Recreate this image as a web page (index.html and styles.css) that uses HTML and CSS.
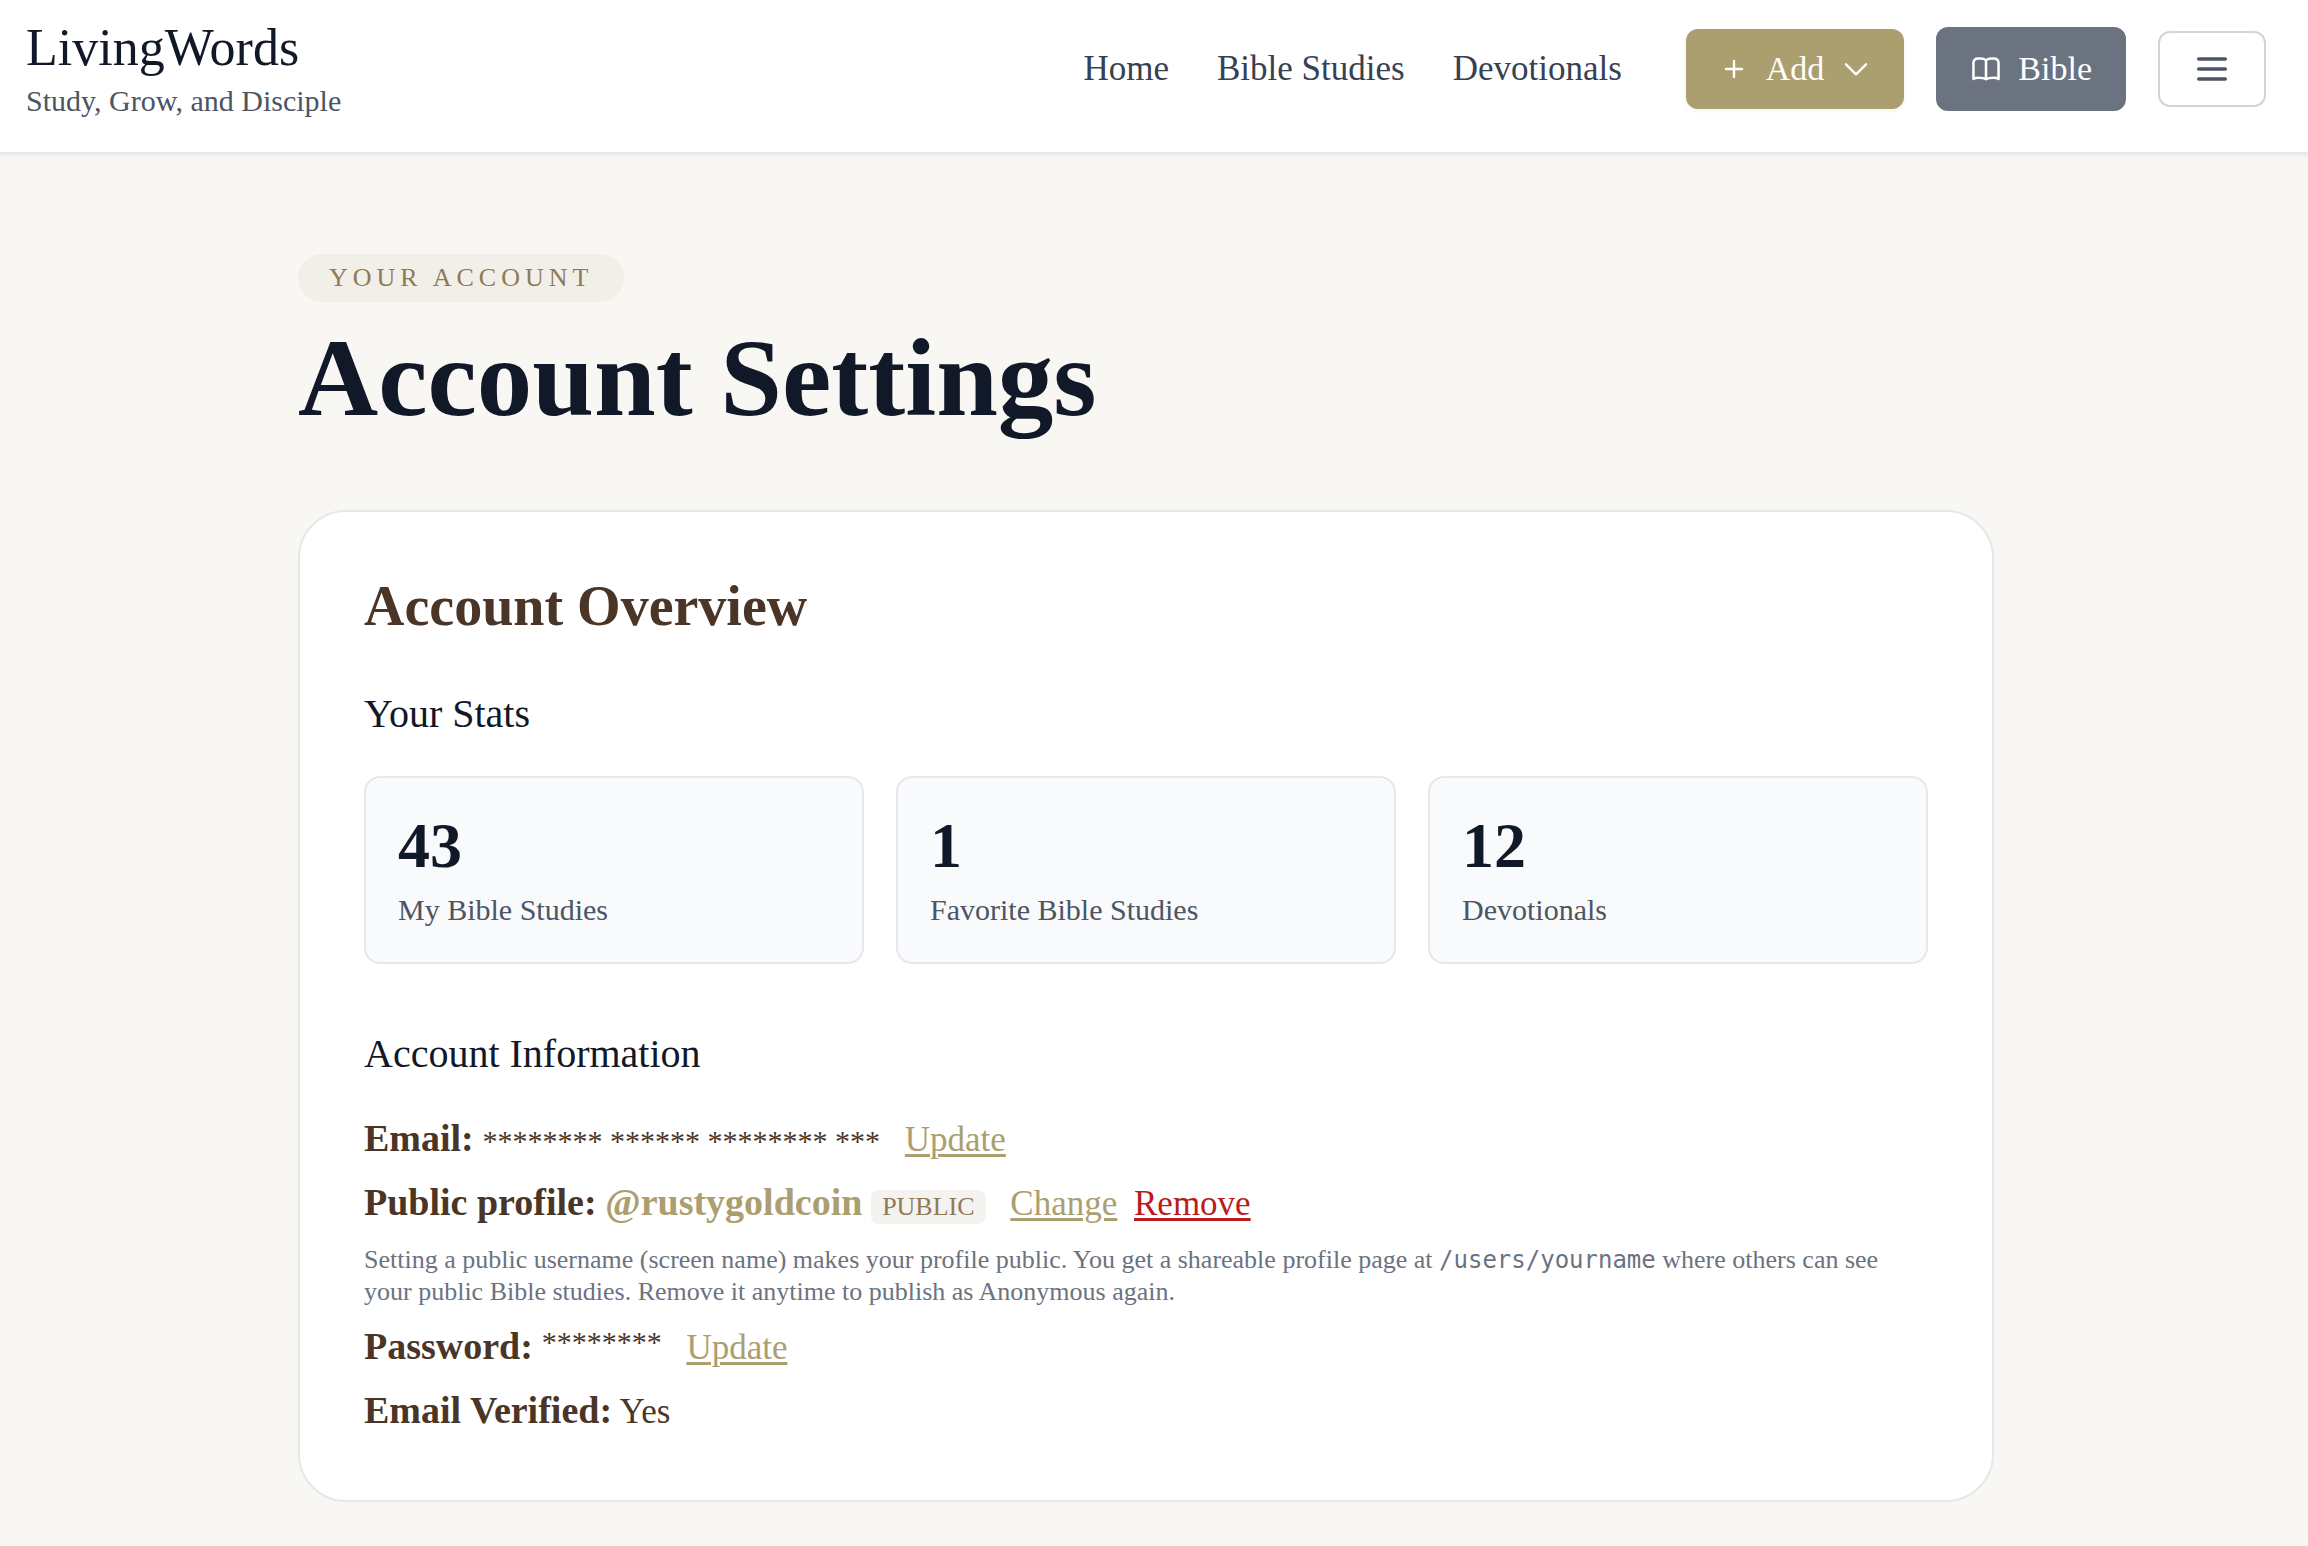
FILE: index.html
```html
<!DOCTYPE html>
<html lang="en">
<head>
	<meta charset="utf-8">
	<meta name="viewport" content="width=device-width, initial-scale=1">
	<title>Account Settings - LivingWords</title>
	<link rel="stylesheet" href="styles.css">
</head>
<body>

	<header class="site-header">
		<a href="#" class="brand">
			<span class="brand-name">LivingWords</span>
			<span class="brand-tagline">Study, Grow, and Disciple</span>
		</a>

		<nav class="main-nav">
			<a href="#">Home</a>
			<a href="#">Bible Studies</a>
			<a href="#">Devotionals</a>
		</nav>

		<div class="actions">
			<button type="button" class="btn btn-add">
				<svg class="icon" viewBox="0 0 32 32" stroke-width="2.4"><path d="M16 8v16M8 16h16"/></svg>
				Add
				<svg class="icon" viewBox="0 0 24 24" stroke-width="1.8"><path d="M19.500 8.500l-7.500 7.500-7.500-7.500"/></svg>
			</button>
			<button type="button" class="btn btn-bible">
				<svg class="icon" viewBox="0 0 24 24" stroke-width="1.9"><path d="M12 5.500v14M12 5.500C11 4.600 9.600 4.200 8 4.200H6A3.500 3.500 0 0 0 2.600 7v12.500C3.600 18.900 4.700 18.600 6 18.600c2.300 0 4.600.2 6 1.100 1.400-.9 3.700-1.100 6-1.100 1.300 0 2.400.3 3.400.9V7A3.500 3.500 0 0 0 18 4.200h-2c-1.600 0-3 .4-4 1.300"/></svg>
				Bible
			</button>
			<button type="button" class="btn btn-menu" aria-label="Menu">
				<svg class="icon-menu" viewBox="0 0 24 24" stroke-width="2"><path d="M4 6h16M4 12h16M4 18h16"/></svg>
			</button>
		</div>
	</header>

	<main class="page">
		<span class="eyebrow">YOUR ACCOUNT</span>
		<h1>Account Settings</h1>

		<section class="card">
			<h2>Account Overview</h2>

			<h3>Your Stats</h3>
			<div class="stats">
				<div class="stat">
					<div class="stat-value">43</div>
					<div class="stat-label">My Bible Studies</div>
				</div>
				<div class="stat">
					<div class="stat-value">1</div>
					<div class="stat-label">Favorite Bible Studies</div>
				</div>
				<div class="stat">
					<div class="stat-value">12</div>
					<div class="stat-label">Devotionals</div>
				</div>
			</div>

			<h3>Account Information</h3>
			<div class="info">
				<p>
					<strong>Email:</strong>
					<span class="masked">******** ****** ******** ***</span>
					<a href="#" class="action">Update</a>
				</p>
				<p>
					<strong>Public profile:</strong>
					<a href="#" class="username">@rustygoldcoin</a>
					<span class="tag">PUBLIC</span>
					<a href="#" class="action">Change</a>
					<a href="#" class="action-remove">Remove</a>
				</p>
				<p class="hint">
					Setting a public username (screen name) makes your profile public. You get a shareable profile page at <code>/users/yourname</code> where others can see your public Bible studies. Remove it anytime to publish as Anonymous again.
				</p>
				<p>
					<strong>Password:</strong>
					<span class="masked masked-password">********</span>
					<a href="#" class="action">Update</a>
				</p>
				<p><strong>Email Verified:</strong> Yes</p>
			</div>
		</section>
	</main>

</body>
</html>
```
FILE: styles.css
```css
*, *:before, *:after {
  box-sizing: border-box;
}

body {
  margin: 0;
  background: #f8f7f3;
  color: #4a3527;
  font-family: "Liberation Serif", serif;
  font-size: 35px;
  line-height: 48px;
}

h1, h2, h3, p {
  margin: 0;
}

/* header */
.site-header {
  display: flex;
  align-items: center;
  padding: 16px 42px 30px 26px;
  background: #fff;
  border-bottom: 2px solid #e5e7eb;
  box-shadow: 0 2px 4px rgba(0,0,0,0.05);
}

.brand {
  display: flex;
  flex-direction: column;
  margin-right: auto;
  text-decoration: none;
}
.brand-name {
  font-size: 52px;
  line-height: 64px;
  color: #111827;
}
.brand-tagline {
  font-size: 30px;
  line-height: 42px;
  color: #4b5563;
}

.main-nav {
  display: flex;
  gap: 48px;
  margin-right: 64px;
}
.main-nav a {
  color: #374151;
  text-decoration: none;
}

.actions {
  display: flex;
  align-items: center;
  gap: 32px;
}
.btn {
  display: flex;
  align-items: center;
  gap: 16px;
  padding: 16px 32px;
  border: 0;
  border-radius: 12px;
  color: #fff;
  font: inherit;
  font-size: 34px;
  cursor: pointer;
}
.btn svg {
  fill: none;
  stroke: currentColor;
  stroke-linecap: round;
  stroke-linejoin: round;
}
.btn-add {
  background: #ab9e6f;
  box-shadow: 0 2px 4px rgba(0,0,0,0.05);
}
.btn-bible {
  background: #6b7280;
  border: 2px solid #6b7280;
}
.btn-menu {
  background: #fff;
  border: 2px solid #d1d5db;
  color: #4b5563;
}
.icon {
  width: 32px;
  height: 32px;
}
.icon-menu {
  width: 40px;
  height: 40px;
}

/* page */
.page {
  max-width: 1808px;
  margin: 0 auto;
  padding: 100px 64px 40px 48px;
}
.eyebrow {
  display: block;
  width: fit-content;
  padding: 0 31px;
  border-radius: 24px;
  background: #f1efe8;
  color: #8f7a58;
  font-size: 26px;
  letter-spacing: 5px;
}
h1 {
  margin: 20px 0 76px;
  font-size: 111px;
  line-height: 112px;
  color: #111827;
}

.card {
  padding: 64px;
  background: #fff;
  border: 2px solid #e5e7eb;
  border-radius: 48px;
}
h2 {
  margin-bottom: 52px;
  font-size: 56px;
  line-height: 60px;
}
h3 {
  margin-bottom: 36px;
  font-size: 40px;
  font-weight: normal;
  line-height: 52px;
  color: #111827;
}

.stats {
  display: grid;
  grid-template-columns: repeat(3, 1fr);
  gap: 32px;
  margin-bottom: 64px;
}
.stat {
  padding: 32px;
  background: #f9fafb;
  border: 2px solid #e5e7eb;
  border-radius: 16px;
}
.stat-value {
  margin-bottom: 8px;
  font-size: 64px;
  font-weight: bold;
  line-height: 72px;
  color: #111827;
}
.stat-label {
  font-size: 30px;
  line-height: 40px;
  color: #4b5563;
}

/* account info rows */
.info {
  display: flex;
  flex-direction: column;
  gap: 16px;
}
.info strong, .username {
  font-size: 38px;
  font-weight: bold;
  line-height: 1;
}
.info a {
  color: #ab9e6f;
  text-decoration-thickness: 3px;
  text-underline-offset: 3px;
}
.info .username {
  text-decoration: none;
}
.info .action {
  margin-left: 16px;
}
.info .action-remove {
  margin-left: 8px;
  color: #b91c1c;
}
.masked {
  font-size: 30px;
  line-height: 1;
}
.masked-password {
  vertical-align: 7px;
}
.tag {
  display: inline-block;
  padding: 0 11px;
  border-radius: 8px;
  background: #f5f3f0;
  color: #8f7a58;
  font-size: 26px;
  line-height: 34px;
}
.info .hint {
  font-size: 26px;
  line-height: 32px;
  color: #6b7280;
}
.hint code {
  font-family: "DejaVu Sans Mono", monospace;
  font-size: 24px;
  line-height: 1;
}
```
